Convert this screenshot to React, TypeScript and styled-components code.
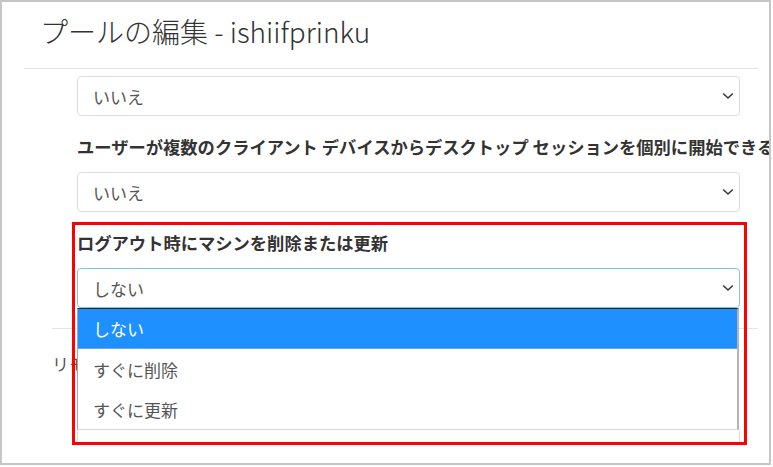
import React from "react";
import styled, { createGlobalStyle } from "styled-components";

const Global = createGlobalStyle`
  html, body { margin: 0; padding: 0; background: #fff; }
  body { font-family: "Noto Sans CJK JP", "Noto Sans", sans-serif; }
  * { box-sizing: border-box; }
`;

const Frame = styled.div`
  position: relative;
  width: 771px;
  height: 465px;
  border: 2px solid #c6c6c6;
  background: #fff;
  overflow: hidden;
  display: flex;
  flex-direction: column;
`;

const Header = styled.div`
  padding: 9px 0 0 38px;
`;

const Title = styled.h1`
  margin: 0;
  font-size: 28px;
  line-height: 40px;
  font-weight: 300;
  color: #333;
  font-family: "Noto Sans CJK JP", "Noto Sans", sans-serif;
`;

const Rule = styled.div<{ $left: number; $right: number; $top: number }>`
  height: 1px;
  background: #e5e5e5;
  margin: ${(p) => p.$top}px ${(p) => p.$right}px 0 ${(p) => p.$left}px;
`;

const Body = styled.div`
  position: relative;
  height: 376px;
  overflow: hidden;
  padding: 7px 11px 0 50px;
`;

const Group = styled.div<{ $gap?: number }>`
  margin: ${(p) => p.$gap ?? 18}px 18px 0 25px;
`;

const Label = styled.div`
  font-size: 17.3px;
  line-height: 24px;
  font-weight: 600;
  color: #333;
  white-space: nowrap;
  margin-bottom: 13px;
  padding-top: 1px;
`;

const SelectWrap = styled.div`
  position: relative;
`;

const Select = styled.div<{ $focus?: boolean }>`
  height: 40px;
  border: 1px solid ${(p) => (p.$focus ? "#86c3da" : "#dcdcdc")};
  border-radius: 4px;
  padding: 0 30px 0 15px;
  display: flex;
  align-items: center;
  justify-content: space-between;
  font-size: 17px;
  color: #555;
  background: #fff;
`;

const Chevron = styled.svg`
  position: absolute;
  right: 6px;
  top: 50%;
  margin-top: -4px;
`;

const Popup = styled.ul`
  position: absolute;
  left: 0;
  right: 1px;
  top: 40px;
  margin: 0;
  padding: 0;
  list-style: none;
  background: #fff;
  border-top: 1px solid #2b2b2b;
  border-left: 1px solid #a8a8a8;
  border-right: 2px solid #b4b4b4;
  border-bottom: 1px solid #d8d8d8;
  z-index: 2;
`;

const Option = styled.li<{ $active?: boolean }>`
  height: 40px;
  display: flex;
  align-items: center;
  padding-left: 15px;
  font-size: 17px;
  color: ${(p) => (p.$active ? "#fff" : "#555")};
  background: ${(p) => (p.$active ? "#1e90ff" : "#fff")};
  border-bottom: ${(p) => (p.$active ? "1px solid #6aa9d8" : "none")};
`;

const SectionText = styled.div`
  margin-top: 23px;
  font-size: 17px;
  line-height: 24px;
  color: #555;
  white-space: nowrap;
`;

const Highlight = styled.div`
  position: absolute;
  left: 70px;
  top: 220px;
  width: 675px;
  height: 223px;
  border: 3px solid #ff0000;
  pointer-events: none;
  z-index: 5;
`;

const ChevronIcon = () => (
  <Chevron width="12" height="8" viewBox="0 0 12 8">
    <path d="M1.2 1.5 L6 6 L10.8 1.5" fill="none" stroke="#3a3a3a" strokeWidth="1.6" />
  </Chevron>
);

const Field = ({ text, focus }: { text: string; focus?: boolean }) => (
  <Select $focus={focus}>
    <span>{text}</span>
    <ChevronIcon />
  </Select>
);

export default function App() {
  return (
    <>
      <Global />
      <Frame>
        <Header>
          <Title>プールの編集 - ishiifprinku</Title>
        </Header>
        <Rule $left={22} $right={11} $top={17} />
        <Body>
          <Group $gap={0}>
            <SelectWrap>
              <Field text="いいえ" />
            </SelectWrap>
          </Group>
          <Group>
            <Label>
              ユーザーが複数のクライアント デバイスからデスクトップ セッションを個別に開始できるようにする
            </Label>
            <SelectWrap>
              <Field text="いいえ" />
            </SelectWrap>
          </Group>
          <Group>
            <Label>ログアウト時にマシンを削除または更新</Label>
            <SelectWrap>
              <Field text="しない" focus />
              <Popup>
                <Option $active>しない</Option>
                <Option>すぐに削除</Option>
                <Option>すぐに更新</Option>
              </Popup>
            </SelectWrap>
          </Group>
          <Rule $left={0} $right={0} $top={20} />
          <SectionText>リモート設定</SectionText>
          <Group $gap={52}>
            <SelectWrap>
              <Field text="VMware Blast" />
            </SelectWrap>
          </Group>
        </Body>
        <Highlight />
      </Frame>
    </>
  );
}
